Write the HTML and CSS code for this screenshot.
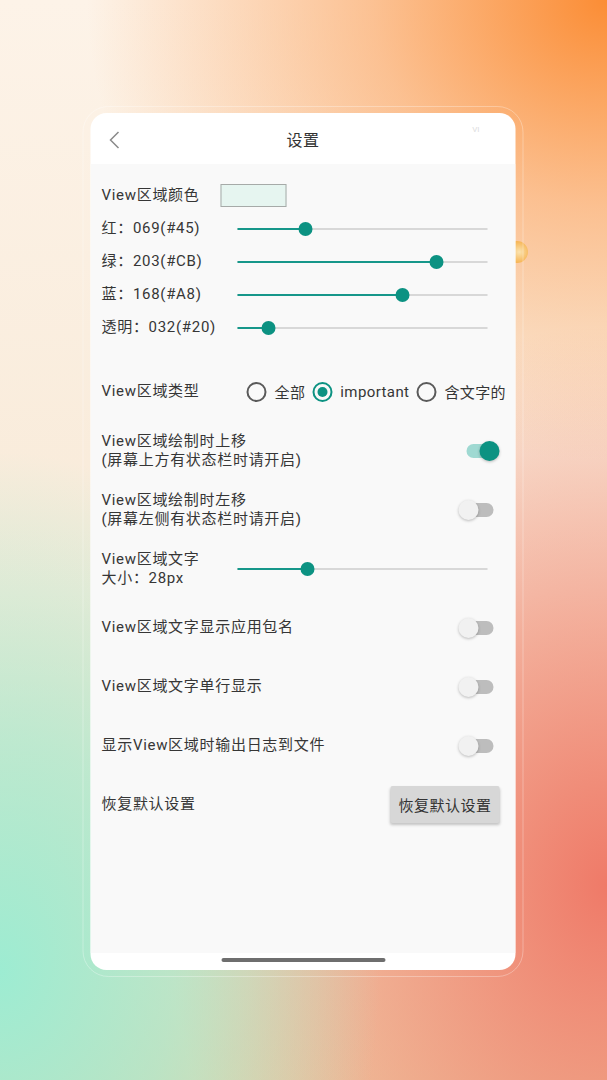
FILE: index.html
```html
<!DOCTYPE html>
<html lang="zh-CN">
<head>
    <meta charset="UTF-8">
    <meta name="viewport" content="width=device-width, initial-scale=1.0">
    <title>设置</title>
    <link rel="stylesheet" href="styles.css">
</head>
<body>

<div class="blob"></div>
<div class="frame">
    <div class="card">
        <div class="header">
            <svg class="back" width="12" height="18" viewBox="0 0 12 18">
                <polyline points="10,1 2,9 10,17" fill="none" stroke="#8a8a8a" stroke-width="1.5"></polyline>
            </svg>
            <div class="title">设置</div>
            <div class="corner-mark">VI</div>
        </div>

        <div class="content">
            <!-- 颜色设置 -->
            <div class="color-row">
                <div class="label label-color">View区域颜色</div>
                <div class="swatch"></div>
            </div>
            <div class="color-row">
                <div class="label label-fixed">红：069(#45)</div>
                <div class="slider"><div class="fill" style="width:27.1%"></div><div class="thumb" style="left:27.1%"></div></div>
            </div>
            <div class="color-row">
                <div class="label label-fixed">绿：203(#CB)</div>
                <div class="slider"><div class="fill" style="width:79.6%"></div><div class="thumb" style="left:79.6%"></div></div>
            </div>
            <div class="color-row">
                <div class="label label-fixed">蓝：168(#A8)</div>
                <div class="slider"><div class="fill" style="width:65.9%"></div><div class="thumb" style="left:65.9%"></div></div>
            </div>
            <div class="color-row">
                <div class="label label-fixed">透明：032(#20)</div>
                <div class="slider"><div class="fill" style="width:12.5%"></div><div class="thumb" style="left:12.5%"></div></div>
            </div>

            <div class="setting-row first">
                <div class="label label-fixed">View区域类型</div>
                <div class="radio-group">
                    <span class="radio"></span><span class="radio-text">全部</span>
                    <span class="radio checked"></span><span class="radio-text">important</span>
                    <span class="radio"></span><span class="radio-text">含文字的</span>
                </div>
            </div>

            <div class="setting-row">
                <div class="label">View区域绘制时上移<br>(屏幕上方有状态栏时请开启)</div>
                <div class="switch on"><span class="knob"></span></div>
            </div>
            <div class="setting-row">
                <div class="label">View区域绘制时左移<br>(屏幕左侧有状态栏时请开启)</div>
                <div class="switch"><span class="knob"></span></div>
            </div>
            <div class="setting-row">
                <div class="label label-fixed">View区域文字<br>大小：28px</div>
                <div class="slider"><div class="fill" style="width:28%"></div><div class="thumb" style="left:28%"></div></div>
            </div>
            <div class="setting-row">
                <div class="label">View区域文字显示应用包名</div>
                <div class="switch"><span class="knob"></span></div>
            </div>
            <div class="setting-row">
                <div class="label">View区域文字单行显示</div>
                <div class="switch"><span class="knob"></span></div>
            </div>
            <div class="setting-row">
                <div class="label">显示View区域时输出日志到文件</div>
                <div class="switch"><span class="knob"></span></div>
            </div>
            <div class="setting-row">
                <div class="label">恢复默认设置</div>
                <button class="reset-btn">恢复默认设置</button>
            </div>
        </div>

        <div class="footer">
            <div class="handle"></div>
        </div>
    </div>
</div>

</body>
</html>
```

FILE: styles.css
```css
body {
    margin: 0;
    width: 607px;
    height: 1080px;
    overflow: hidden;
    position: relative;
    font-family: Roboto, "Noto Sans CJK SC", sans-serif;
    color: #363636;
    background:
        radial-gradient(ellipse 520px 460px at 100% 0%, #fb8d35 0%, rgba(251, 160, 90, 0.6) 45%, rgba(251, 180, 120, 0) 100%),
        radial-gradient(ellipse 380px 520px at 0% 90%, #9decd2 0%, rgba(160, 236, 210, 0.65) 45%, rgba(160, 236, 210, 0) 100%),
        radial-gradient(ellipse 440px 560px at 100% 82%, #ef7a68 0%, rgba(240, 130, 110, 0.55) 50%, rgba(240, 130, 110, 0) 100%),
        linear-gradient(180deg, #fdf3e8 0%, #f8ead8 55%, #eed3aa 100%);
}
.blob {
    position: absolute;
    left: 506px;
    top: 241px;
    width: 22px;
    height: 22px;
    border-radius: 50%;
    background: radial-gradient(circle at 60% 50%, #fbe3b0 0%, #f6b04a 70%);
}
.frame {
    position: relative;
    width: 425px;
    margin: 106px auto 0;
    padding: 6px 7px;
    border: 1.5px solid rgba(255, 255, 255, 0.3);
    border-radius: 26px;
    box-sizing: content-box;
    transform: translateX(-0.5px);
}
.card {
    height: 857px;
    background: #fff;
    border-radius: 16px;
    overflow: hidden;
    display: flex;
    flex-direction: column;
}
.header {
    position: relative;
    height: 51px;
    flex: none;
    display: flex;
    align-items: center;
    justify-content: center;
}
.back {
    position: absolute;
    left: 18px;
    top: 18px;
}
.title {
    font-size: 16px;
    letter-spacing: 0.5px;
    color: #333;
}
.corner-mark {
    position: absolute;
    right: 36px;
    top: 12px;
    font-size: 8px;
    color: #ddd;
}
.content {
    flex: 1;
    background: #f9f9f9;
    padding: 15px 15px 0 11px;
}
.color-row {
    height: 33px;
    display: flex;
    align-items: center;
}
.label {
    font-size: 15px;
    line-height: 19px;
    letter-spacing: 0.7px;
    white-space: nowrap;
}
.label-fixed {
    width: 136px;
    flex: none;
}
.label-color {
    width: 119px;
    flex: none;
}
.swatch {
    width: 64px;
    height: 21px;
    background: #e6f5f0;
    border: 1px solid #a6aaa8;
}
.slider {
    position: relative;
    flex: 1;
    height: 14px;
    margin-right: 13px;
}
.slider::before {
    content: "";
    position: absolute;
    left: 0;
    right: 0;
    top: 6px;
    height: 2px;
    background: #d8d8d8;
}
.fill {
    position: absolute;
    left: 0;
    top: 6px;
    height: 2px;
    background: #16978a;
}
.thumb {
    position: absolute;
    top: 0;
    width: 14px;
    height: 14px;
    margin-left: -7px;
    border-radius: 50%;
    background: #0c9282;
}
.setting-row {
    height: 59px;
    display: flex;
    align-items: center;
    justify-content: space-between;
}
.setting-row.first {
    margin-top: 18px;
    justify-content: flex-start;
}
.radio-group {
    display: flex;
    align-items: center;
    margin-left: 9px;
    font-size: 15px;
    white-space: nowrap;
}
.radio {
    flex: none;
    width: 16px;
    height: 16px;
    border: 2px solid #5a5a5a;
    border-radius: 50%;
    position: relative;
}
.radio.checked {
    border-color: #0c9282;
}
.radio.checked::after {
    content: "";
    position: absolute;
    left: 3px;
    top: 3px;
    width: 10px;
    height: 10px;
    border-radius: 50%;
    background: #0c9282;
}
.radio-text {
    flex: none;
    margin: 0 7px 0 8px;
    letter-spacing: 0.4px;
}
.switch {
    position: relative;
    width: 44px;
    height: 22px;
    margin-right: -1px;
}
.switch::before {
    content: "";
    position: absolute;
    left: 6px;
    top: 4px;
    width: 30px;
    height: 14px;
    border-radius: 7px;
    background: #bdbdbd;
}
.switch .knob {
    position: absolute;
    left: 1px;
    top: 1px;
    width: 20px;
    height: 20px;
    border-radius: 50%;
    background: #f1f1f1;
    box-shadow: 0 1px 3px rgba(0, 0, 0, 0.25);
}
.switch.on::before {
    left: 9px;
    background: #9fd9d2;
}
.switch.on .knob {
    left: 22px;
    background: #0c9282;
}
.reset-btn {
    width: 109px;
    height: 37px;
    border: none;
    border-radius: 2px;
    background: #d7d7d7;
    box-shadow: 0 2px 3px rgba(0, 0, 0, 0.22);
    font-family: Roboto, "Noto Sans CJK SC", sans-serif;
    font-size: 15px;
    letter-spacing: 0.5px;
    color: #333;
    margin-right: 1px;
}
.footer {
    height: 17px;
    flex: none;
    display: flex;
    justify-content: center;
}
.handle {
    width: 164px;
    height: 4px;
    margin-top: 5px;
    border-radius: 2px;
    background: #6e6e6e;
}
```
